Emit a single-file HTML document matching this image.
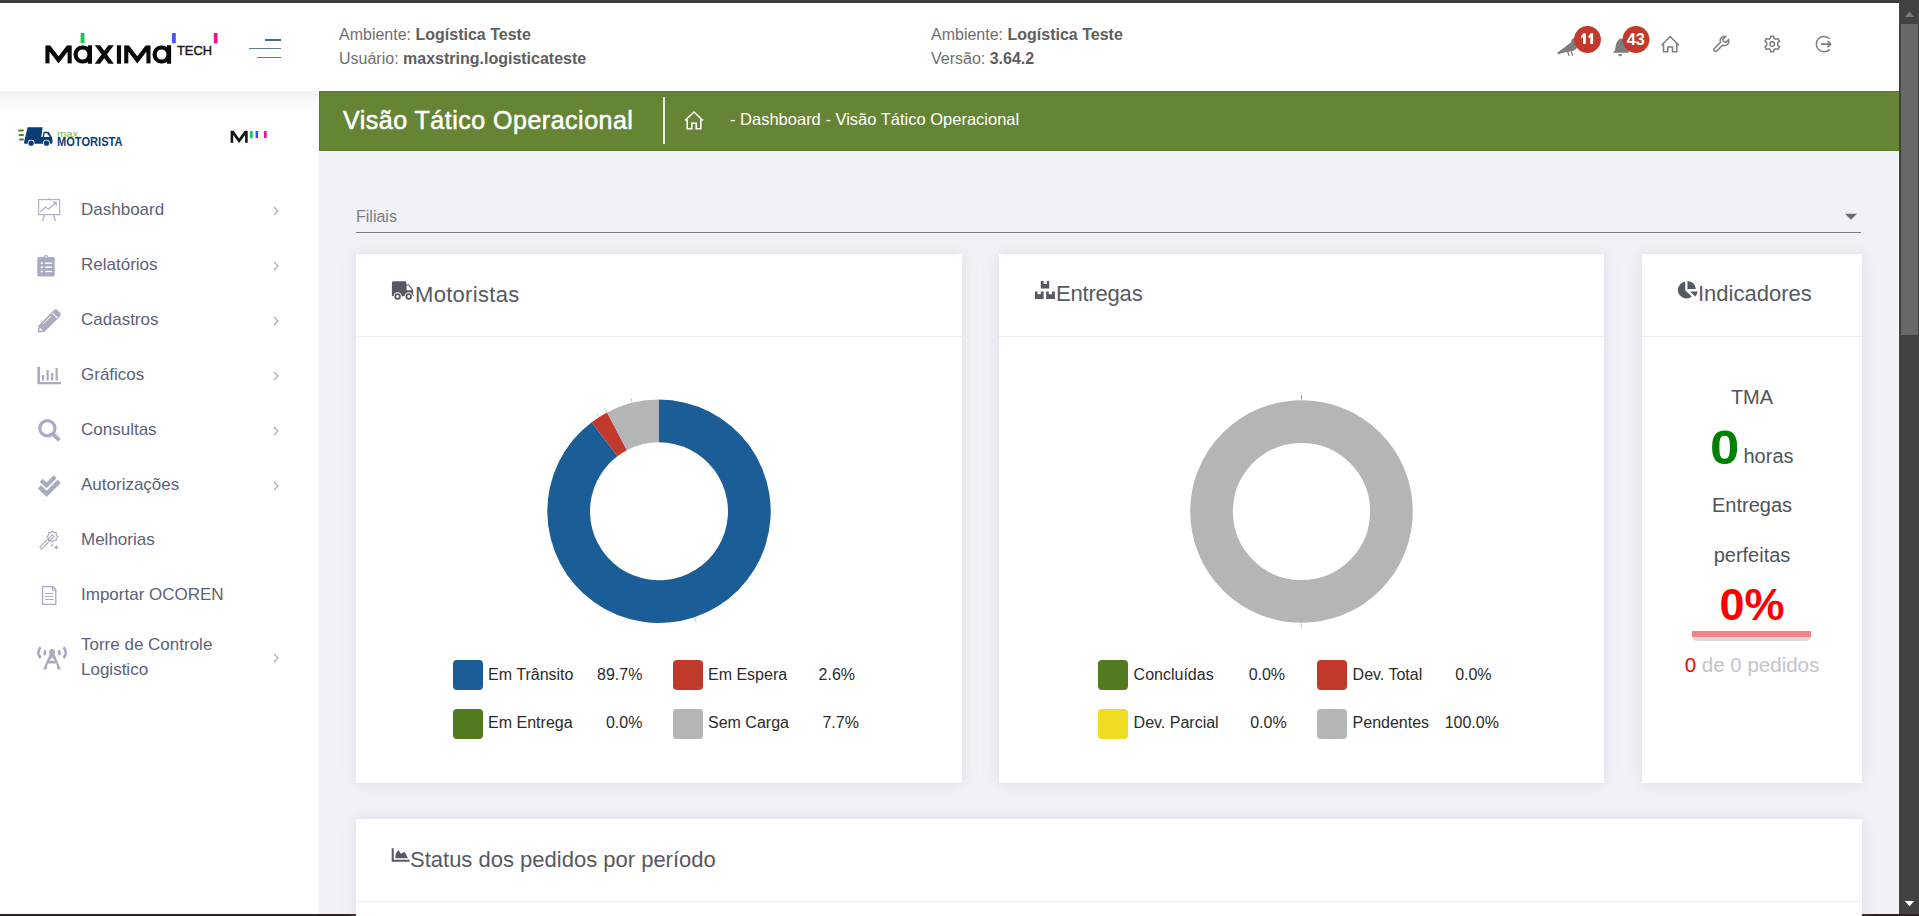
<!DOCTYPE html>
<html><head><meta charset="utf-8">
<style>
*{box-sizing:border-box;margin:0;padding:0}
html,body{width:1919px;height:916px;overflow:hidden;background:#f1f2f7;font-family:"Liberation Sans",sans-serif}
.abs{position:absolute}
#topline{left:0;top:0;width:1919px;height:3px;background:#3b3b3b}
#header{left:0;top:3px;width:1899px;height:88px;background:#fff}
#sidebar{left:0;top:91px;width:319px;height:825px;background:#fff}
#sbshadow{left:0;top:91px;width:318px;height:22px;background:linear-gradient(#f3f3f3,#fff)}
#green{left:319px;top:91px;width:1580px;height:60px;background:#658535;border-left:1px solid #557a25;border-top:1px solid #557a25;border-bottom:1px solid #5a7e2b}
#gline{left:319px;top:151px;width:1579px;height:1px;background:#f8f9fb}
#scroll{left:1899px;top:0;width:20px;height:916px;background:#424242}
#thumb{left:1901px;top:24px;width:17px;height:311px;background:#686868}
#botline{left:0;top:914px;width:1919px;height:2px;background:#2e2222}
.card{position:absolute;background:#fff;box-shadow:0 0 13px rgba(180,180,200,.35)}
.card .hd{position:absolute;left:0;top:82px;width:100%;height:1px;background:#ebedf2}
.htxt{position:absolute;font-size:16px;color:#6f6f6f;line-height:24px;white-space:nowrap}
.htxt b{color:#5e5e5e}
.menu{position:absolute;left:81px;font-size:17px;color:#5d5f7a;white-space:nowrap}
.chev{position:absolute;left:272px;width:6px;height:6px;border-right:1px solid #8e90a6;border-top:1px solid #8e90a6;transform:rotate(45deg)}
.ctitle{position:absolute;font-size:22px;color:#575962;white-space:nowrap;line-height:26px}
.leg{position:absolute;font-size:16px;color:#2b2b2b;white-space:nowrap}
.sq{position:absolute;width:30px;height:30px;border-radius:4px}
</style></head><body>
<div class="abs" id="topline"></div>
<div class="abs" id="header"></div>
<div class="abs" id="sidebar"></div>
<div class="abs" id="sbshadow"></div>
<div class="abs" id="green"></div><div class="abs" id="gline"></div>

<svg class="abs" style="left:0;top:0" width="320" height="91" viewBox="0 0 320 91">
 <defs><clipPath id="lc"><rect x="40" y="45.3" width="140" height="18.4"/></clipPath></defs>
 <g clip-path="url(#lc)">
  <path fill="#0a0a0a" d="M45.4 63.6V45.3H50L58.5 56.3L67.1 45.3H71.7V63.6H67.6V51.8L58.5 63.6L49.5 51.8V63.6Z"/>
  <path fill="#0a0a0a" d="M124.2 63.6V45.3H128.8L137.3 56.3L145.9 45.3H150.5V63.6H146.4V51.8L137.3 63.6L128.3 51.8V63.6Z"/>
  <g fill="none" stroke="#0a0a0a" stroke-width="4.2">
   <ellipse cx="82.6" cy="54.5" rx="7" ry="7.2"/>
   <path d="M89.9 44V64"/>
   <path d="M96.5 44L112 65M112 44L96.5 65" stroke-width="4.4"/>
   <path d="M119 44V64"/>
   <ellipse cx="161.6" cy="54.5" rx="7" ry="7.2"/>
   <path d="M169 44V64"/>
  </g>
 </g>
 <rect x="80.6" y="33" width="3.9" height="10.3" fill="#17c94f"/>
 <rect x="172" y="33" width="3.8" height="10.3" fill="#4b55ff"/>
 <rect x="213.8" y="33" width="3.7" height="10.3" fill="#f0148c"/>
 <text x="177" y="54.7" font-family="Liberation Sans" font-size="13.2" fill="#1a1a1a" stroke="#1a1a1a" stroke-width="0.45" textLength="35" lengthAdjust="spacingAndGlyphs">TECH</text>
 <rect x="265" y="39" width="16" height="2" fill="#4f6a88"/>
 <rect x="249" y="48" width="32" height="1" fill="#5f7893"/>
 <rect x="257" y="57" width="24" height="1" fill="#5f7893"/>
</svg>
<div class="htxt" style="left:339px;top:23px">Ambiente: <b>Logística Teste</b><br>Usuário: <b>maxstring.logisticateste</b></div>
<div class="htxt" style="left:931px;top:23px">Ambiente: <b>Logística Teste</b><br>Versão: <b>3.64.2</b></div>

<div class="abs" id="scroll"></div>
<div class="abs" id="thumb"></div>

<svg class="abs" style="left:1899px;top:0" width="20" height="916" viewBox="1899 0 20 916">
 <path d="M1904.8 17H1914.2L1909.5 11.8Z" fill="#7b7b7b"/>
 <path d="M1904.8 900.9H1914.2L1909.5 906.3Z" fill="#fff"/>
</svg>
<div class="abs" style="left:1898px;top:151px;width:1px;height:763px;background:#fafafc"></div>
<div class="abs" id="botline"></div>

<div class="abs" style="left:343px;top:102px;font-size:25px;color:#fff;white-space:nowrap;line-height:36px;letter-spacing:0.5px;-webkit-text-stroke:0.55px #fff">Visão Tático Operacional</div>
<div class="abs" style="left:663px;top:97px;width:1.5px;height:47px;background:#e6e9e0"></div>
<svg class="abs" style="left:682px;top:110px" width="24" height="22" viewBox="0 0 24 22">
 <path d="M3 10.5L12 2L21 10.5M5.2 8.6V18.8H9.8V13.3H14.2V18.8H18.8V8.6" fill="none" stroke="#fff" stroke-width="1.6" stroke-linejoin="miter"/>
</svg>
<div class="abs" style="left:730px;top:109px;font-size:16.5px;color:#fff;white-space:nowrap;line-height:20px">- Dashboard - Visão Tático Operacional</div>
<svg class="abs" style="left:1550px;top:20px" width="300" height="45" viewBox="1550 20 300 45">
 <g fill="#7d7d7d">
  <path d="M1557.6 52.4L1571.2 42.3C1571 39.8 1572.4 38 1574.6 38L1577 38.6L1577.6 46C1577 49 1574.6 51 1570.5 51.5C1566.5 52 1562 53 1558.8 54.2C1557.8 54.5 1557.2 53.2 1557.6 52.4Z"/><path d="M1567.6 51.4L1569 55.8M1571.3 51.4L1572.7 55.8" stroke="#7d7d7d" stroke-width="1.3"/>
  <path d="M1620.6 38.2C1617.5 40 1616 42.8 1615.6 46.8L1614.9 50.5L1612.6 52.8H1628.8V46C1627.6 42 1624.5 39 1620.6 38.2ZM1617.9 54.2H1622.4C1622 55.6 1621.2 56.2 1620.2 56.2C1619.1 56.2 1618.3 55.6 1617.9 54.2Z"/>
 </g>
 <circle cx="1587.5" cy="39.5" r="13.4" fill="#c0392b"/>
 <circle cx="1636" cy="39.5" r="13.4" fill="#c0392b"/>
 <path fill="#fff" d="M1580.9 36.4L1583.4 33.2H1585.8V44.1H1583V37.2L1581.7 38.6Z M1588.2 36.4L1590.7 33.2H1593.1V44.1H1590.3V37.2L1589 38.6Z"/>
 <text x="1635.8" y="44.5" text-anchor="middle" font-family="Liberation Sans" font-weight="bold" font-size="16.3" fill="#fff">43</text>
 <g fill="none" stroke="#7d7d7d" stroke-width="1.5">
  <path d="M1661.5 45.2L1670.2 36.5L1678.8 45.2M1663.5 43.5V51.7H1667.8V47H1672.5V51.7H1676.8V43.5"/>
  <path d="M1714.5 51C1713.5 50 1713.5 49.3 1714.3 48.5L1720.5 42.3C1719.7 39.7 1720.3 37.6 1723.2 36.6L1725.3 36.5L1722.8 39.3L1723.6 41.4L1725.8 42.3L1728.6 39.7C1729.5 42.8 1728 45.2 1724.5 45.8L1722.7 45.2L1716.5 51.2C1715.8 51.8 1715.1 51.7 1714.5 51Z"/>
  <circle cx="1772.2" cy="44" r="2.3"/>
  <path d="M1770.8 36.2H1773.6L1774.2 38.4L1775.8 39.3L1778 38.6L1779.4 41L1777.7 42.6V45.4L1779.4 47L1778 49.4L1775.8 48.7L1774.2 49.6L1773.6 51.8H1770.8L1770.2 49.6L1768.6 48.7L1766.4 49.4L1765 47L1766.7 45.4V42.6L1765 41L1766.4 38.6L1768.6 39.3L1770.2 38.4Z"/>
  <path d="M1829.8 38.8C1828.3 37.3 1826.2 36.5 1824 36.5C1819.6 36.5 1816.3 40 1816.3 44.2C1816.3 48.4 1819.6 51.8 1824 51.8C1826.2 51.8 1828.3 50.9 1829.8 49.4"/>
  <path d="M1821 44.2H1830.5M1827.6 41.2L1830.6 44.2L1827.6 47.2" stroke-width="1.7"/>
 </g>
</svg>
<div class="menu" style="top:200px">Dashboard</div>
<div class="menu" style="top:255px">Relatórios</div>
<div class="menu" style="top:310px">Cadastros</div>
<div class="menu" style="top:365px">Gráficos</div>
<div class="menu" style="top:420px">Consultas</div>
<div class="menu" style="top:475px">Autorizações</div>
<div class="menu" style="top:530px">Melhorias</div>
<div class="menu" style="top:585px">Importar OCOREN</div>
<div class="menu" style="top:633px;line-height:24.6px">Torre de Controle<br>Logistico</div>

<svg class="abs" style="left:0;top:91px" width="318" height="825" viewBox="0 91 318 825">
 <g fill="none" stroke="#a3a5bb" stroke-width="1.1"><path d="M274 207L278 211L274 215"/><path d="M274 262L278 266L274 270"/><path d="M274 317L278 321L274 325"/><path d="M274 372L278 376L274 380"/><path d="M274 427L278 431L274 435"/><path d="M274 482L278 486L274 490"/><path d="M274 654L278 658L274 662"/></g>
 <g fill="none" stroke="#aeb0c4" stroke-width="1.2">
  <rect x="38.6" y="199.6" width="21" height="15"/>
  <path d="M49 198V200M44.5 215L42.5 221M53.5 215L55.5 221M40.5 212L45.5 207L48.5 209.3L56 202.5M53 202.3H56.2V205.5"/>
 </g>
 <g fill="#a9abc0">
  <path d="M39.5 257H43.5A2.6 2.6 0 0 1 48.5 257H52.5A2 2 0 0 1 54.7 259V274.5A2 2 0 0 1 52.5 276.6H39.5A2 2 0 0 1 37.3 274.5V259A2 2 0 0 1 39.5 257Z"/>
  <path d="M38.3 325.8L54 310.1A2.4 2.4 0 0 1 57.4 310.1L60.1 312.8A2.4 2.4 0 0 1 60.1 316.2L44.4 331.9L37.8 332.4Z"/>
  <path d="M37.4 366.8H40V382H61V384.3H37.4Z"/>
  <rect x="42" y="375" width="2.2" height="5.5"/><rect x="46.5" y="370" width="2.2" height="10.5"/><rect x="51" y="373" width="2.2" height="7.5"/><rect x="55.5" y="368" width="2.2" height="12.5"/>
  <path d="M60.3 436.8C57.8 434 56 432.5 55.5 432.8"/>
 </g>
 <g fill="#fff">
  <circle cx="46" cy="256.8" r="0.9"/>
  <rect x="40.8" y="262.3" width="2" height="1.8"/><rect x="45" y="262.5" width="7" height="1.4"/>
  <rect x="40.8" y="266.3" width="2" height="1.8"/><rect x="45" y="266.5" width="7" height="1.4"/>
  <rect x="40.8" y="270.6" width="2" height="1.8"/><rect x="45" y="270.8" width="7" height="1.4"/>
  <path d="M52.2 312.9L57.3 318" stroke="#fff" stroke-width="1.1"/><path d="M39.4 330.8L39.7 327.4L42.8 330.5Z"/>
  <path d="M42.9 324.2L51.1 316" stroke="#fff" stroke-width="1"/>
 </g>
 <g fill="none" stroke="#a9abc0">
  <circle cx="47.4" cy="428.3" r="7.6" stroke-width="3.2"/>
  <path d="M52.8 433.8L59.3 440.3" stroke-width="3.8"/>
  <path d="M42.6 586.6H53L55.8 589.6V604.3H42.6Z" stroke-width="1.3"/>
  <path d="M52.5 586.8V590H55.6M45 593.5H53.5M45 596.5H53.5M45 599.5H53.5" stroke-width="1.2"/>
  
  
  
 </g>
 
 <g fill="none" stroke="#a9abc0" stroke-width="1.05">
 <path d="M52.40 530.90L54.01 532.62L56.36 532.54L56.28 534.89L58.00 536.50L56.28 538.11L56.36 540.46L54.01 540.38L52.40 542.10L50.79 540.38L48.44 540.46L48.52 538.11L46.80 536.50L48.52 534.89L48.44 532.54L50.79 532.62Z"/>
 <g transform="rotate(-45 46.8 541.9)"><rect x="38" y="540.6" width="17.6" height="2.6"/></g>
 <path d="M56.3 545.3V549.5M54.2 547.4H58.4" stroke-width="1.2"/>
</g>
<circle cx="52" cy="545.3" r="1" fill="#a9abc0"/>
 <g fill="none" stroke="#a9abc0" stroke-linejoin="miter"><path d="M41.2 480.2L46.6 485.4L55.2 476.6" stroke-width="4.2"/><path d="M39.4 486.8L46.6 493.8L59.2 481.3" stroke-width="4.6"/></g>
 <g fill="#a9abc0">
  <circle cx="52.1" cy="651.9" r="2.9"/>
  <path fill-rule="evenodd" d="M50 653.5L43.2 669.6H46.5L47.9 663.6H56.3L57.5 669.6H60.8L54.2 653.5Z M52.1 657.3L49.2 660.8H55.1Z"/>
 </g>
 <g fill="none" stroke="#a9abc0" stroke-width="2.8">
  <path d="M40.6 647.2C37.7 650.5 37.7 654.8 40.6 658"/>
  <path d="M63.5 647.2C66.4 650.5 66.4 654.8 63.5 658"/>
  <path d="M45.6 650.2C44.3 651.8 44.3 653.5 45.6 655" stroke-width="2.6"/>
  <path d="M58.6 650.2C59.9 651.8 59.9 653.5 58.6 655" stroke-width="2.6"/>
 </g>
</svg>

<svg class="abs" style="left:0;top:110px" width="300" height="50" viewBox="0 110 300 50">
 <g fill="#4f8a2c"><rect x="18" y="129.5" width="6" height="2" rx="1"/><rect x="18.5" y="134" width="5.5" height="2" rx="1"/><rect x="19" y="138.5" width="5" height="2" rx="1"/></g>
 <path fill="#083d75" d="M27.6 127.3H42.6L41.3 137H42.5L43.7 131.8H48.6L52.1 137.5L52.6 142L51.8 143.7H50.1H24.5L24 142.5Z"/>
 <path fill="#fff" d="M44.6 133.2H47.3L49.6 137H44Z"/>
 <circle cx="31.1" cy="143.2" r="3.4" fill="#fff"/><circle cx="46.5" cy="143.2" r="3.4" fill="#fff"/><circle cx="31.1" cy="143.2" r="2.6" fill="#083d75"/><circle cx="46.5" cy="143.2" r="2.6" fill="#083d75"/>
 <text x="57" y="136.5" font-family="Liberation Sans" font-size="9.5" fill="#86b061" textLength="21" lengthAdjust="spacingAndGlyphs">max</text>
 <text x="57" y="146.2" font-family="Liberation Sans" font-weight="bold" font-size="12.6" fill="#0a3f78" textLength="65.5" lengthAdjust="spacingAndGlyphs">MOTORISTA</text>
 <path fill="#151515" d="M230.6 142.8V130.8H233.6L239.1 138.4L244.7 130.8H247.7V142.8H245.1V135L239.1 142.9L233.2 135V142.8Z"/>
 <rect x="250" y="131" width="2.8" height="7" rx="0.6" fill="#17d05b"/>
 <rect x="255.6" y="131" width="2.5" height="7" rx="0.6" fill="#3c46ff"/>
 <rect x="264" y="131" width="2.7" height="7" rx="0.6" fill="#ff0a8c"/>
</svg>

<div class="abs" style="left:356px;top:207px;font-size:16px;color:#7c7c7c;line-height:20px">Filiais</div>
<div class="abs" style="left:356px;top:232px;width:1505px;height:1px;background:#7c7c7c"></div>
<svg class="abs" style="left:1844px;top:212px" width="14" height="9" viewBox="0 0 14 9"><path d="M1 1.8H13L7 7.8Z" fill="#6a6a6a"/></svg>
<div class="card" style="left:356px;top:254px;width:606px;height:529px"><div class="hd"></div></div>
<div class="card" style="left:999px;top:254px;width:605px;height:529px"><div class="hd"></div></div>
<div class="card" style="left:1642px;top:254px;width:220px;height:529px"><div class="hd"></div></div>
<div class="card" style="left:356px;top:819px;width:1506px;height:200px"><div class="hd"></div></div>
<svg class="abs" style="left:0;top:0" width="1919" height="916" viewBox="0 0 1919 916">
<path fill="#1b5e97" d="M659.00 399.60A111.7 111.7 0 1 1 591.65 422.19L617.40 456.25A69 69 0 1 0 659.00 442.30Z"/><path fill="#c0392b" d="M591.65 422.19A111.7 111.7 0 0 1 607.04 412.42L626.90 450.22A69 69 0 0 0 617.40 456.25Z"/><path fill="#b4b5b7" d="M607.04 412.42A111.7 111.7 0 0 1 659.00 399.60L659.00 442.30A69 69 0 0 0 626.90 450.22Z"/><path d="M694.68 617.68L696.11 621.94" stroke="#bbb" stroke-width="0.8"/><path d="M598.88 416.57L596.47 412.77" stroke="#bbb" stroke-width="0.8"/><path d="M606.81 411.98L604.72 407.99" stroke="#bbb" stroke-width="0.8"/><path d="M632.12 402.37L631.04 398.00" stroke="#bbb" stroke-width="0.8"/>
<circle cx="1301.5" cy="511.5" r="89.94999999999999" fill="none" stroke="#b4b5b7" stroke-width="42.7"/><path d="M1301.50 399.70L1301.50 395.20" stroke="#777" stroke-width="0.8"/><path d="M1301.50 623.30L1301.50 627.80" stroke="#ccc" stroke-width="0.8"/>
</svg>

<div class="ctitle" style="left:415px;top:282px;letter-spacing:0.3px">Motoristas</div>
<div class="ctitle" style="left:1056px;top:281px;letter-spacing:-0.2px">Entregas</div>
<div class="ctitle" style="left:1698px;top:281px">Indicadores</div>
<div class="ctitle" style="left:410px;top:846.5px">Status dos pedidos por período</div>
<svg class="abs" style="left:0;top:0" width="1919" height="916" viewBox="0 0 1919 916">
 <g fill="#555963">
  <path d="M393.4 281.2H405A1.3 1.3 0 0 1 406.3 282.5V284.5H409L413 289.5V294.5L413.8 295V296.3H391.9V282.7A1.5 1.5 0 0 1 393.4 281.2Z"/>
  <path d="M1040.8 281.1H1043.6V284H1046.9V281.1H1049.2V288.6H1040.8Z M1034.9 291.4H1037.5V294.2H1040.8V291.4H1043.6V298.9H1034.9Z M1046.2 291.4H1048.8V294.2H1052V291.4H1054.9V298.9H1046.2Z"/>
  <path d="M1677.8 289.8A8.7 8.7 0 0 0 1691.8 296.6L1685.2 290.2V281.6A8.7 8.7 0 0 0 1677.8 289.8Z M1687.5 280.9A8.6 8.6 0 0 1 1695.8 289H1687.5Z M1690 291.4H1697.7A8.7 8.7 0 0 1 1695.2 296.5Z"/>
  <path d="M391.7 848.3H393.7V859.7H409.6V861.8H391.7Z M395.3 858.3L395.8 853.8L398.4 850.1L400.9 853.7L404.6 851.8L408 858.3Z"/>
 </g>
 <path fill="#fff" d="M406.6 285.6H408.5L411.7 289.6V290.3H406.6Z"/>
 <g fill="#fff"><circle cx="397.6" cy="296.5" r="4.2"/><circle cx="408.7" cy="296.5" r="4.2"/></g>
 <g fill="#555963"><circle cx="397.6" cy="296.5" r="3.2"/><circle cx="408.7" cy="296.5" r="3.2"/></g>
 <g fill="#fff"><circle cx="397.6" cy="296.5" r="1.4"/><circle cx="408.7" cy="296.5" r="1.4"/></g>
</svg>
<div class="sq" style="left:452.6px;top:660px;background:#1b5e97"></div><div class="leg" style="left:488.1px;top:666px">Em Trânsito</div><div class="leg" style="left:442.4px;width:200px;text-align:right;top:666px">89.7%</div>
<div class="sq" style="left:672.8px;top:660px;background:#c0392b"></div><div class="leg" style="left:708.0px;top:666px">Em Espera</div><div class="leg" style="left:655.0px;width:200px;text-align:right;top:666px">2.6%</div>
<div class="sq" style="left:452.6px;top:708.8px;background:#527a1f"></div><div class="leg" style="left:488.1px;top:714px">Em Entrega</div><div class="leg" style="left:442.4px;width:200px;text-align:right;top:714px">0.0%</div>
<div class="sq" style="left:672.8px;top:708.8px;background:#b4b5b7"></div><div class="leg" style="left:708.0px;top:714px">Sem Carga</div><div class="leg" style="left:658.9px;width:200px;text-align:right;top:714px">7.7%</div>
<div class="sq" style="left:1098.3px;top:660px;background:#527a1f"></div><div class="leg" style="left:1133.6px;top:666px">Concluídas</div><div class="leg" style="left:1085.1px;width:200px;text-align:right;top:666px">0.0%</div>
<div class="sq" style="left:1317.4px;top:660px;background:#c0392b"></div><div class="leg" style="left:1352.6px;top:666px">Dev. Total</div><div class="leg" style="left:1291.6px;width:200px;text-align:right;top:666px">0.0%</div>
<div class="sq" style="left:1098.3px;top:708.8px;background:#f0dc22"></div><div class="leg" style="left:1133.6px;top:714px">Dev. Parcial</div><div class="leg" style="left:1086.7px;width:200px;text-align:right;top:714px">0.0%</div>
<div class="sq" style="left:1317.4px;top:708.8px;background:#b4b5b7"></div><div class="leg" style="left:1352.6px;top:714px">Pendentes</div><div class="leg" style="left:1298.9px;width:200px;text-align:right;top:714px">100.0%</div>

<div class="abs" style="left:1642px;width:220px;top:385px;text-align:center;font-size:20px;color:#50535c;line-height:24px">TMA</div>
<div class="abs" style="left:1710px;top:421.5px;font-size:48px;font-weight:bold;color:#008000;line-height:52px;transform:scaleX(1.1);transform-origin:0 0">0</div>
<div class="abs" style="left:1743.5px;top:443.5px;font-size:20px;color:#50535c;line-height:24px">horas</div>
<div class="abs" style="left:1642px;width:220px;top:493px;text-align:center;font-size:20px;color:#50535c;line-height:24px">Entregas</div>
<div class="abs" style="left:1642px;width:220px;top:543px;text-align:center;font-size:20px;color:#50535c;line-height:24px">perfeitas</div>
<div class="abs" style="left:1642px;width:220px;top:580px;text-align:center;font-size:45px;font-weight:bold;color:#f00;line-height:50px">0%</div>
<div class="abs" style="left:1692px;top:631px;width:119px;height:10px;border-radius:0 0 5px 5px;background:#d9d9d9"></div>
<div class="abs" style="left:1692px;top:631px;width:119px;height:6px;background:#f08383"></div>
<div class="abs" style="left:1642px;width:220px;top:653px;text-align:center;font-size:20.5px;color:#c3c3cb;line-height:24px"><span style="color:#f00">0</span> de 0 pedidos</div>
</body></html>
